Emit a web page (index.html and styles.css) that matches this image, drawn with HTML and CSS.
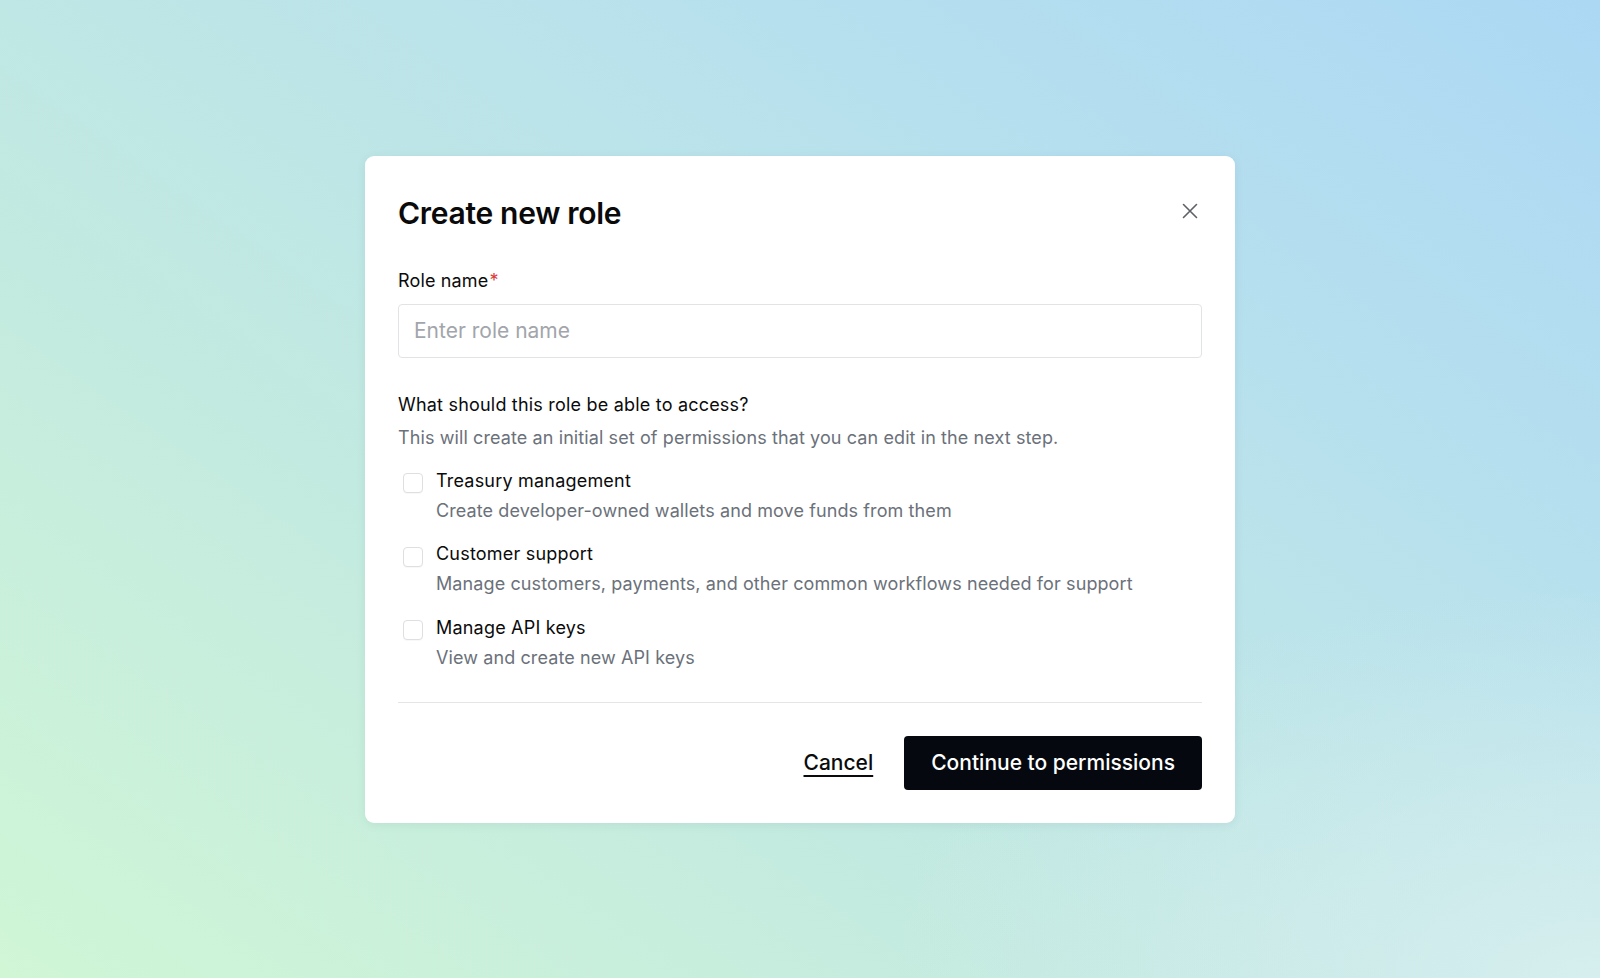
FILE: index.html
```html
<!DOCTYPE html>
<html lang="en">
<head>
<meta charset="utf-8">
<title>Create new role</title>
<link rel="stylesheet" href="styles.css">
</head>
<body>
<main class="backdrop">
  <section class="modal" role="dialog" aria-labelledby="modal-title">
    <header class="modal-header">
      <h1 id="modal-title" class="modal-title">Create new role</h1>
      <button class="close-btn" type="button" aria-label="Close">
        <svg width="16" height="16" viewBox="0 0 16 16" fill="none" stroke="currentColor" stroke-width="1.6" stroke-linecap="round">
          <path d="M1.5 1.5 L14.5 14.5 M14.5 1.5 L1.5 14.5"/>
        </svg>
      </button>
    </header>

    <div class="field">
      <label class="field-label" for="role-name">Role name<span class="required">*</span></label>
      <input id="role-name" class="text-input" type="text" placeholder="Enter role name">
    </div>

    <div class="access">
      <h2 class="access-title">What should this role be able to access?</h2>
      <p class="access-desc">This will create an initial set of permissions that you can edit in the next step.</p>

      <ul class="options">
        <li class="option">
          <span class="checkbox"></span>
          <div class="option-text">
            <div class="option-title">Treasury management</div>
            <div class="option-desc">Create developer-owned wallets and move funds from them</div>
          </div>
        </li>
        <li class="option">
          <span class="checkbox"></span>
          <div class="option-text">
            <div class="option-title">Customer support</div>
            <div class="option-desc">Manage customers, payments, and other common workflows needed for support</div>
          </div>
        </li>
        <li class="option">
          <span class="checkbox"></span>
          <div class="option-text">
            <div class="option-title">Manage API keys</div>
            <div class="option-desc">View and create new API keys</div>
          </div>
        </li>
      </ul>
    </div>

    <footer class="modal-footer">
      <a class="cancel-link" href="#">Cancel</a>
      <button class="primary-btn" type="button">Continue to permissions</button>
    </footer>
  </section>
</main>
</body>
</html>
```

FILE: styles.css
```css
* { box-sizing: border-box; }

html, body {
  margin: 0;
  padding: 0;
  height: 100%;
}

body {
  font-family: Inter, "Noto Sans", "Liberation Sans", sans-serif;
  color: #0b0b0c;
}

.backdrop {
  height: 100vh;
  display: flex;
  align-items: center;
  justify-content: center;
  background:
    radial-gradient(ellipse 45% 40% at 100% 100%, rgba(214, 238, 238, 1) 0%, rgba(214, 238, 238, 0) 100%),
    linear-gradient(215deg, #acd8f4 0%, #b9e2ec 35%, #c3eae0 65%, #d0f6d6 100%);
}

.modal {
  width: 870px;
  background: #ffffff;
  border-radius: 9px;
  padding: 33px;
  box-shadow: 0 2px 10px rgba(40, 80, 90, 0.08);
}

.modal-header {
  display: flex;
  align-items: center;
  justify-content: space-between;
  padding-top: 2px;
}

.modal-title {
  margin: 0;
  font-size: 30px;
  line-height: 44px;
  font-weight: 600;
  letter-spacing: -0.3px;
  color: #0a0a0b;
}

.close-btn {
  width: 26px;
  height: 26px;
  padding: 0;
  border: 0;
  background: transparent;
  color: #5d6066;
  display: flex;
  align-items: center;
  justify-content: center;
  margin-right: -1px;
  margin-top: -4px;
}

.field {
  margin-top: 32px;
  display: flex;
  flex-direction: column;
  gap: 9px;
}

.field-label {
  font-size: 18px;
  line-height: 28px;
  font-weight: 400;
  letter-spacing: 0.15px;
  color: #0b0b0c;
}

.required {
  color: #dc3b3b;
  margin-left: 1px;
}

.text-input {
  height: 54px;
  width: 100%;
  border: 1.5px solid #e2e3e5;
  border-radius: 4px;
  padding: 0 15px;
  font-family: inherit;
  font-size: 21px;
  color: #0b0b0c;
  outline: none;
}

.text-input::placeholder {
  color: #a2a5ab;
}

.access {
  margin-top: 33px;
}

.access-title {
  margin: 0;
  font-size: 18px;
  line-height: 28px;
  font-weight: 400;
  letter-spacing: 0.2px;
  color: #0b0b0c;
}

.access-desc {
  margin: 5px 0 0;
  font-size: 18px;
  line-height: 28px;
  letter-spacing: 0.1px;
  color: #6b717a;
}

.options {
  list-style: none;
  margin: 15px 0 0;
  padding: 0;
  display: flex;
  flex-direction: column;
  gap: 15.5px;
}

.option {
  display: flex;
  align-items: flex-start;
  gap: 13px;
  padding-left: 5px;
}

.checkbox {
  flex: none;
  width: 20px;
  height: 20px;
  margin-top: 6.5px;
  border: 1.5px solid #dedfe2;
  border-radius: 4px;
  background: #fff;
  box-shadow: 0 1px 1px rgba(0, 0, 0, 0.03);
}

.option-text {
  display: flex;
  flex-direction: column;
  gap: 2px;
}

.option-title {
  font-size: 18px;
  line-height: 28px;
  font-weight: 400;
  letter-spacing: 0.2px;
  color: #0b0b0c;
}

.option-desc {
  font-size: 18px;
  line-height: 28px;
  letter-spacing: 0.1px;
  color: #6b717a;
}

.modal-footer {
  margin-top: 30px;
  padding-top: 33px;
  border-top: 1px solid #e3e5e9;
  display: flex;
  justify-content: flex-end;
  align-items: center;
  gap: 31px;
}

.cancel-link {
  font-size: 21px;
  line-height: 28px;
  font-weight: 500;
  color: #0b0b0c;
  text-decoration: underline;
  text-underline-offset: 5px;
  text-decoration-thickness: 1.5px;
}

.primary-btn {
  height: 54px;
  padding: 0 27px;
  border: 0;
  border-radius: 4px;
  background: #05090f;
  color: #ffffff;
  font-family: inherit;
  font-size: 21px;
  font-weight: 500;
}
```
